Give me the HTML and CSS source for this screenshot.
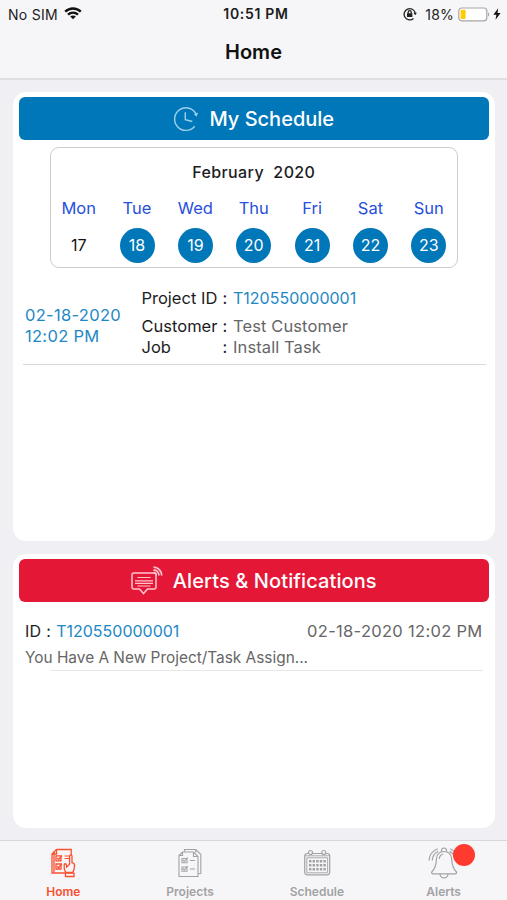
FILE: index.html
```html
<!DOCTYPE html>
<html lang="en">
<head>
    <meta charset="UTF-8">
    <meta name="viewport" content="width=device-width, initial-scale=1.0">
    <title>Home</title>
    <link rel="stylesheet" href="styles.css">
</head>
<body>
    <header class="top">
        <div class="status">
            <div class="status-left">
                <span class="carrier">No SIM</span>
                <svg class="wifi" width="18" height="13" viewBox="0 0 18 13" fill="none" stroke="#111" stroke-width="2.4">
                    <path d="M1.2 4.7C5.6.4 12.4.4 16.8 4.7"/>
                    <path d="M4 7.7c2.9-2.7 7.1-2.7 10 0"/>
                    <path d="M9 12.3L6.2 9.6c1.6-1.4 4-1.4 5.600 0z" fill="#111" stroke="none"/>
                </svg>
            </div>
            <span class="clock">10:51 PM</span>
            <div class="status-right">
                <svg class="lock" width="14" height="14" viewBox="0 0 14 14" fill="none" stroke="#222" stroke-width="1.3">
                    <path d="M10.5 11.4A5.600 5.600 0 1 1 12.200 6"/>
                    <path d="M10.500 5.700h3.400l-1.700 2.600z" fill="#222" stroke="none"/>
                    <rect x="4" y="6.200" width="5.400" height="3.800" fill="#222" stroke="none"/>
                    <path d="M5.200 6.500V5.200a1.500 1.500 0 0 1 3 0v1.300"/>
                </svg>
                <span class="percent">18%</span>
                <svg class="battery" width="32" height="15" viewBox="0 0 32 15">
                    <rect x=".8" y="1" width="28" height="12.8" rx="3" fill="#fff" stroke="#a5a5a8" stroke-width="1.2"/>
                    <rect x="2.6" y="2.8" width="5" height="9.2" rx="1" fill="#fc0"/>
                    <path d="M30 5.2c1.6.8 1.6 3.6 0 4.4z" fill="#a5a5a8"/>
                </svg>
                <svg class="bolt" width="8" height="12" viewBox="0 0 8 12">
                    <path d="M5.2.3L.4 6.8h3L2.5 11.7 7.6 5H4.5z" fill="#111"/>
                </svg>
            </div>
        </div>
        <h1 class="page-title">Home</h1>
    </header>

    <main class="content">
        <section class="card card-schedule">
            <h2 class="card-title blue">
                <svg class="clock-icon" width="26" height="26" viewBox="0 0 26 26" fill="none" stroke="#9fd0ea" stroke-width="1.4">
                    <path d="M21.7 20.2A11.3 11.3 0 1 1 23.2 8.4"/>
                    <path d="M20.8 8.600l3 2 1.200-4z" fill="#9fd0ea" stroke="none"/>
                    <path d="M12.3 6.3v7.4l7 1.8"/>
                </svg>
                <span>My Schedule</span>
            </h2>

            <div class="calendar">
                <div class="month">February&nbsp; 2020</div>
                <div class="week">
                    <span>Mon</span><span>Tue</span><span>Wed</span><span>Thu</span><span>Fri</span><span>Sat</span><span>Sun</span>
                </div>
                <div class="days">
                    <span class="day plain">17</span>
                    <span class="day">18</span>
                    <span class="day">19</span>
                    <span class="day">20</span>
                    <span class="day">21</span>
                    <span class="day">22</span>
                    <span class="day">23</span>
                </div>
            </div>

            <div class="task">
                <div class="task-date">02-18-2020<br>12:02 PM</div>
                <div class="task-info">
                    <div class="field first"><span class="label">Project ID</span><span class="colon">:</span><span class="value link">T120550000001</span></div>
                    <div class="field"><span class="label">Customer</span><span class="colon">:</span><span class="value">Test Customer</span></div>
                    <div class="field"><span class="label">Job</span><span class="colon">:</span><span class="value">Install Task</span></div>
                </div>
            </div>
        </section>

        <section class="card card-alerts">
            <h2 class="card-title red">
                <svg class="chat-icon" width="32" height="30" viewBox="0 0 32 30" fill="none" stroke="#ffc4cf" stroke-width="1.5">
                    <path d="M3 7h20q2 0 2 2v12q0 2-2 2h-6.5l-4 4.5-4-4.500H3q-2 0-2-2V9q0-2 2-2z"/>
                    <path d="M6.5 11.5h13M4 14.8h18M4 17.3h18M6.5 20h13" stroke-width="1.2"/>
                    <path d="M22.5 1.2c4.6 0 8.2 3.6 8.2 8.4M22.5 4c3.2 0 5.4 2.3 5.4 5.4M22.5 6.7c1.8 0 2.7 1 2.7 2.7" stroke-width="1.8"/>
                </svg>
                <span>Alerts &amp; Notifications</span>
            </h2>
            <div class="alert">
                <div class="alert-top">
                    <div class="alert-id"><span class="id-label">ID :</span><span class="link">T120550000001</span></div>
                    <div class="alert-date">02-18-2020 12:02 PM</div>
                </div>
                <div class="alert-text">You Have A New Project/Task Assign...</div>
            </div>
        </section>
    </main>

    <nav class="tabs">
        <a class="tab active">
            <svg width="32" height="32" viewBox="0 0 32 32" fill="none" stroke="currentColor" stroke-width="1.3">
                <path d="M9.500 2.500h14.700v6M9.500 2.500L5 7v19h13"/>
                <path d="M9.500 2.500V7H5M7 4.500v21"/>
                <path d="M9 8.800h5v5h-5zM9 17h5v5h-5z"/>
                <path d="M10.200 11l1.500 1.500 3.200-4M10.200 19.200l1.500 1.500 3.200-4"/>
                <path d="M17.500 9H22M17.500 11.500H22" stroke-width="1"/>
                <path d="M19 25.500c-2-2.200-2-4.500-1.800-7.500 0-1.700 2.100-1.700 2.200 0l.3 2.200 2.900-3V9.300c0-1.800 2.400-1.800 2.400 0v6.300c2 .3 2.700 1.600 2.500 3.500-.1 2.800-.7 4.600-1.700 6.400z"/>
                <path d="M18.500 26.200h8.500v3.300h-8.500z"/>
            </svg>
            <span>Home</span>
        </a>
        <a class="tab">
            <svg width="32" height="32" viewBox="0 0 32 32" fill="none" stroke="currentColor" stroke-width="1.1">
                <path d="M8.5 5h11l4.5 4.5V29.5H5V8.5z"/>
                <path d="M8.5 5v3.5H5M19.5 5v4.5H24"/>
                <path d="M10.5 4.5V2.5h11.2l5.100 4.800V26.500h-2.500M21.700 2.500v3"/>
                <path d="M8 11.5h5v4.300H8zM8 20h5v4.300H8z"/>
                <path d="M9 13l1.400 1.500 3.200-4M9 21.500l1.400 1.500 3.200-4M16 13.500h5M16 22h5"/>
            </svg>
            <span>Projects</span>
        </a>
        <a class="tab">
            <svg width="32" height="32" viewBox="0 0 32 32" fill="none" stroke="currentColor" stroke-width="1.2">
                <rect x="3.7" y="6.5" width="25" height="21.3" rx="2.5"/>
                <path d="M5.800 10.800h20.800v15H5.800zM4 8.800h24.400" stroke-width=".9"/>
                <circle cx="9.5" cy="5.500" r="2" fill="#f6f6f8"/>
                <circle cx="22.8" cy="5.500" r="2" fill="#f6f6f8"/>
                <path d="M8 14.2h17M8 18.2h17M8 22.2h17" stroke-width="2.4" stroke-dasharray="2.4 1.2"/>
            </svg>
            <span>Schedule</span>
        </a>
        <a class="tab">
            <svg width="32" height="32" viewBox="0 0 32 32" fill="none" stroke="currentColor" stroke-width="1.2">
                <path d="M16 4.500c-4.500 0-7.200 3-7.500 7.200-.3 5.700-.8 9.400-4.600 13-.8 1 .1 2.200 1.200 2.200h22c1.200 0 2-1.200 1.200-2.200-3.800-3.600-4.400-7.300-4.700-13C23.300 7.500 20.500 4.500 16 4.500z"/>
                <path d="M13.500 4.800V3.500a2.500 2.500 0 0 1 5 0v1.300M12 27c.5 5.200 7.500 5.200 8 0"/>
                <path d="M11.300 12c.2-2.700 1.600-4.500 4-5M1 13.500C1.400 8 4.600 3.800 9.800 1.800M4.200 13.500c.3-4 2.500-7.500 6-9.300M22 1.800c2.500 1 4.400 2.500 5.800 4.500M21.500 4.200c2 1 3.400 2.300 4.300 4"/>
            </svg>
            <i class="badge"></i>
            <span>Alerts</span>
        </a>
    </nav>
</body>
</html>
```
FILE: styles.css
```css
* {
    box-sizing: border-box;
}
body {
    margin: 0;
    height: 900px;
    display: flex;
    flex-direction: column;
    background: #efeff4;
    font-family: Inter, "Liberation Sans", sans-serif;
    font-size: 16px;
    color: #1c1c1e;
    overflow: hidden;
}
h1, h2 {
    margin: 0;
}

/* status bar and title */
.top {
    height: 80px;
    flex: none;
    background: #f6f6f8;
    border-bottom: 2px solid #dfdfe2;
}
.status {
    height: 28px;
    padding: 0 6px 0 8px;
    display: grid;
    grid-template-columns: 1fr auto 1fr;
    align-items: center;
    font-size: 14px;
}
.status-left, .status-right {
    display: flex;
    align-items: center;
}
.status-left {
    gap: 6px;
}
.status-right {
    justify-content: flex-end;
}
.carrier {
    letter-spacing: 0.3px;
}
.wifi {
    position: relative;
    top: -1px;
}
.clock {
    font-weight: 600;
    letter-spacing: 0.7px;
    margin: -2px 0 0 3px;
}
.percent {
    margin: 0 4px 0 8px;
    letter-spacing: 0.2px;
}
.bolt {
    margin-left: 3px;
}
.page-title {
    text-align: center;
    font-size: 20px;
    font-weight: 600;
    line-height: 49px;
    color: #111;
}

/* cards */
.content {
    flex: 1;
    padding: 12px 12.5px 12px 13px;
    display: flex;
    flex-direction: column;
    gap: 13px;
}
.card {
    background: #fff;
    border-radius: 13px;
    padding: 5px 6px 0;
}
.card-schedule {
    height: 449px;
}
.card-alerts {
    height: 274px;
}
.card-title {
    height: 43px;
    border-radius: 6px;
    display: flex;
    align-items: center;
    justify-content: center;
    gap: 10px;
    color: #fff;
    font-size: 20px;
    font-weight: 500;
}
.blue {
    background: #0077b8;
}
.red {
    background: #e41836;
    letter-spacing: 0.1px;
}

/* week calendar */
.calendar {
    margin: 7px 30.5px 0 30.5px;
    height: 121px;
    border: 1px solid #cdcdcd;
    border-radius: 9px;
}
.month {
    padding-top: 14px;
    line-height: 20px;
    text-align: center;
    font-weight: 500;
    letter-spacing: 0.4px;
}
.week, .days {
    display: grid;
    grid-template-columns: repeat(7, 1fr);
    margin: 0 -1px;
    justify-items: center;
}
.week {
    margin-top: 16px;
    line-height: 20px;
    font-size: 16.5px;
    color: #2850dc;
}
.days {
    margin-top: 10px;
}
.day {
    width: 35px;
    height: 35px;
    border-radius: 50%;
    background: #0077b8;
    color: #fff;
    text-align: center;
    line-height: 35px;
}
.plain {
    background: none;
    color: #111;
}

/* task row */
.task {
    margin: 0 3px 0 4px;
    height: 97px;
    display: flex;
    border-bottom: 1px solid #d8d8d8;
}
.task-date {
    width: 118.5px;
    padding: 37px 0 0 2px;
    line-height: 21px;
    font-size: 16.5px;
    letter-spacing: 0.3px;
    color: #1e88c4;
}
.task-info {
    padding-top: 20px;
    line-height: 21.5px;
    font-size: 16.5px;
}
.first {
    margin-bottom: 6px;
}
.field {
    display: flex;
}
.label {
    width: 81px;
}
.colon {
    width: 10.5px;
}
.value, .alert-date, .alert-text {
    color: #666;
}
.value {
    letter-spacing: 0.1px;
}
.value.link, .link {
    color: #1e88c4;
    font-size: 16px;
    letter-spacing: 0;
}

/* alert row */
.alert {
    padding: 18px 6px 0;
    line-height: 22px;
}
.alert-top {
    display: flex;
    justify-content: space-between;
}
.id-label {
    margin-right: 5px;
    letter-spacing: 0.3px;
}
.alert-date {
    font-size: 16.5px;
    letter-spacing: 0.3px;
}
.alert-text {
    margin-top: 4px;
    line-height: 24px;
    font-size: 15.4px;
}
.alert::after {
    content: "";
    display: block;
    margin-left: 25px;
    border-bottom: 1px solid #e8e8e8;
}

/* bottom tabs */
.tabs {
    height: 60px;
    flex: none;
    display: flex;
    background: #f6f6f8;
    border-top: 1px solid #d8d8dc;
}
.tab {
    flex: 1;
    position: relative;
    display: flex;
    flex-direction: column;
    align-items: center;
    padding-top: 6px;
    font-size: 12px;
    line-height: 14px;
    font-weight: 600;
    color: #a2a2a5;
}
.tab span {
    margin-top: 6px;
}
.active {
    color: #f8502f;
}
.badge {
    position: absolute;
    top: 3px;
    left: 73px;
    width: 22px;
    height: 22px;
    border-radius: 50%;
    background: #ff3b30;
}
```
